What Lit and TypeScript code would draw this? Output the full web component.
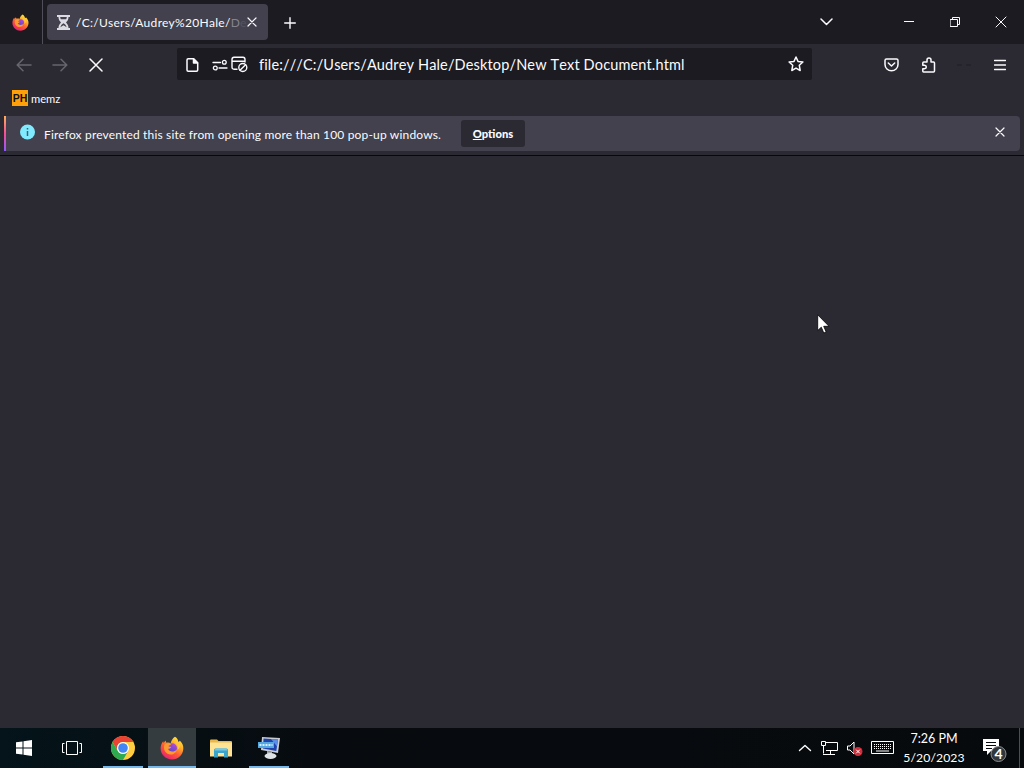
import { LitElement, html, css, svg } from "lit";
import { customElement } from "lit/decorators.js";

const firefox = (size: number) => html`<svg width=${size} height=${size} viewBox="0 0 24 24">
  <defs>
    <linearGradient id="ff" x1="0.85" y1="0" x2="0.2" y2="1">
      <stop offset="0" stop-color="#fff04a" /><stop offset="0.3" stop-color="#ffb32b" />
      <stop offset="0.6" stop-color="#ff5a35" /><stop offset="1" stop-color="#e8187a" />
    </linearGradient>
    <linearGradient id="fg" x1="0.7" y1="0" x2="0.3" y2="1">
      <stop offset="0" stop-color="#b04ad8" /><stop offset="1" stop-color="#5146c8" />
    </linearGradient>
  </defs>
  <path fill="url(#ff)" d="M15 .8c2.2 1.4 3.1 3.2 3.2 4.6 1 .6 1.4 0 1.5-.9C22.400 7 23.600 10 23.300 13 22.800 19 18 23.500 12 23.500S.7 19 .6 12.600C.6 9.500 1.600 7 3.200 5.200l.4 1.700L5.500 4.600l.9 2.200C8 6.300 9.500 6.500 10.600 7.200 11.500 4 13 2 15 .8Z" />
  <circle cx="12" cy="12.300" r="5" fill="url(#fg)" />
  <path fill="#ff9a2e" d="M4.500 8.500c2-1.600 4.800-1.500 6.600-.4-.4 1-1.500 1.500-2.700 2 .8.700 1.800.8 2.900.8-.8 1.400-2 1.700-3.200 1.900 1 3.300 6 4 9 .4-1 5.500-8.500 7.300-12 2.300C3.700 13 3.600 10.500 4.500 8.500Z" />
  <path fill="#ffc83a" d="M14 6.500c3 1 4.500 4 3.700 7.300 2-1.300 3-4 2.500-6.300-1.200-1.700-3.500-2-6.200-1Z" />
</svg>`;

const line = (w: number, h: number, body: unknown, stroke = 1.5) => html`<svg
  width=${w} height=${h} viewBox="0 0 ${w} ${h}" fill="none" stroke="currentColor"
  stroke-width=${stroke} stroke-linecap="round" stroke-linejoin="round">${body}</svg>`;

const cross = (size: number, stroke: number) =>
  line(size, size, svg`<path d="M1 1 ${size - 1} ${size - 1}M${size - 1} 1 1 ${size - 1}" />`, stroke);

@customElement("tab-strip")
class TabStrip extends LitElement {
  static styles = css`
    :host { display: flex; height: 44px; background: #1c1b22; color: #fbfbfe; }
    svg { display: block; flex: none; }
    .home { width: 43px; padding-right: 2px; box-sizing: border-box; display: grid; place-items: center; border-right: 1px solid #504f59; }
    .tab { display: flex; align-items: center; box-sizing: border-box; width: 221px; height: 36px; margin: 4px 0 0 4px; padding: 0 11px 0 10px; border-radius: 4px; background: #42414d; }
    .title { margin: 1px 0 0 6px; white-space: nowrap; font-size: 12px; letter-spacing: 0.320px; line-height: 20px; }
    .fade { color: #85848e; }
    .fade + .fade { color: #55545f; }
    .close { margin-left: auto; }
    .add { display: grid; place-items: center; width: 43px; padding-top: 1px; }
    .all { display: grid; place-items: center; width: 36px; margin-left: auto; margin-right: 42px; }
    .win { display: grid; place-items: center; width: 46px; }
  `;
  render() {
    return html`
      <div class="home">${firefox(17)}</div>
      <div class="tab">
        <svg width="13" height="15" viewBox="0 0 13 15" fill="#dcdbe3"><path d="M0 0h13v2h-1.500c0 2.500-1 4-2.500 5.500 1.500 1.500 2.500 3 2.500 5.500H13v2H0v-2h1.500c0-2.500 1-4 2.500-5.500-1.500-1.500-2.500-3-2.500-5.500H0Z" /><path fill="#42414d" d="M3.200 2h6.600c0 1-.3 1.600-.7 2.200H3.900C3.500 3.600 3.200 3 3.200 2ZM6.500 8.300C5 9 3.800 10.500 3.400 12.300l3.100-2 3.100 2C9.200 10.500 8 9 6.500 8.300Z" /></svg>
        <span class="title">/C:/Users/Audrey%20Hale/<span class="fade">D</span><span class="fade">e</span></span>
        <span class="close">${cross(10, 1.200)}</span>
      </div>
      <div class="add">${line(12, 12, svg`<path d="M6 .7v10.600M.7 6h10.600" />`, 1.400)}</div>
      <div class="all">${line(13, 8, svg`<path d="m1 1 5.500 5.500L12 1" />`)}</div>
      <div class="win">${line(10, 2, svg`<path d="M0 .5h10" />`, 1)}</div>
      <div class="win">${line(10, 10, svg`<path d="M.5 2.500h7v7h-7ZM2.500 2.500v-2h7v7h-2" />`, 1)}</div>
      <div class="win">${cross(12, 1)}</div>
    `;
  }
}

@customElement("nav-bar")
class NavBar extends LitElement {
  static styles = css`
    :host { display: flex; align-items: center; height: 40px; padding: 0 6px; background: #2b2a33; color: #fbfbfe; }
    svg { display: block; }
    .btn { display: grid; place-items: center; width: 36px; height: 40px; padding-top: 1px; box-sizing: border-box; }
    .dim { color: #67666f; }
    .ghost { color: #24232b; }
    .url { display: flex; align-items: center; width: 635px; height: 32px; margin: 0 62px 0 63px; border-radius: 2px; background: #1c1b22; box-sizing: border-box; padding: 1px 8px 0 9px; }
    .perm { margin-left: 13px; }
    .popup { margin-left: 3px; }
    .text { margin-left: 11px; font-size: 14.500px; letter-spacing: 0.140px; line-height: 22px; font-kerning: none; white-space: nowrap; }
    .star { margin: -1px 0 0 auto; }
  `;
  render() {
    return html`
      <div class="btn dim">${line(16, 14, svg`<path d="M15 7H1.500M7 1.200 1.200 7 7 12.800" />`)}</div>
      <div class="btn dim">${line(16, 14, svg`<path d="M1 7h13.500M9 1.200 14.800 7 9 12.800" />`)}</div>
      <div class="btn">${cross(14, 1.500)}</div>
      <div class="url">
        ${line(13, 14, svg`<path d="M2.200.8h5.500l4 4V12q0 1.200-1.200 1.200H2.200Q1 13.200 1 12V2Q1 .8 2.200.8Z" /><path fill="currentColor" d="M7.500 1v4h4Z" />`)}
        <span class="perm">${line(16, 12, svg`<path d="M1 3.500h7.500M7 9h8" /><circle cx="12.300" cy="3.300" r="1.900" /><circle cx="3.300" cy="9" r="1.900" />`, 1.300)}</span>
        <span class="popup">${line(17, 17, svg`<path d="M6 13.200H3Q1 13.200 1 11V3.500Q1 1.300 3 1.300h9q2 0 2 2.200V6M1 5.300h13" /><circle cx="11.800" cy="11.500" r="4" /><path d="m9 14.300 5.600-5.600" />`, 1.400)}</span>
        <span class="text">file:///C:/Users/Audrey Hale/Desktop/New Text Document.html</span>
        <span class="star">${line(16, 16, svg`<path d="m8 1 2 4.400 4.900.6-3.600 3.300.9 5.200L8 12.100 3.800 14.500l.9-5.200L1.100 6 6 5.400Z" />`, 1.500)}</span>
      </div>
      <div class="btn">${line(16, 14, svg`<path d="M2.500 1h10Q14 1 14 2.500V6.500A6.500 6.300 0 0 1 1 6.500V2.500Q1 1 2.500 1Z" /><path d="m4.300 5 3.200 3 3.200-3" />`)}</div>
      <div class="btn">${line(15, 16, svg`<path d="M2.500 15h10q1 0 1-1V6q0-1-1-1H10V3q0-2-2-2T6 3v2H2.800q-1 0-1 1v2.200H3.500Q5.300 8.400 5.300 10T3.500 11.800H1.800V14.300Q1.800 15 2.500 15Z" />`)}</div>
      <div class="btn ghost">${line(16, 4, svg`<path d="M2 2h3M11 2h3" />`, 2)}</div>
      <div class="btn">${line(12, 12, svg`<path d="M.5 1.500h11M.5 6h11M.5 10.500h11" />`, 1.400)}</div>
    `;
  }
}

@customElement("notice-bar")
class NoticeBar extends LitElement {
  static styles = css`
    :host { display: block; background: #2b2a33; color: #fbfbfe; height: 72px; border-bottom: 1px solid #08080c; box-sizing: border-box; }
    svg { display: block; }
    .marks { display: flex; align-items: center; height: 32px; padding-left: 12px; box-sizing: border-box; }
    .ph { width: 16px; height: 16px; margin-top: -4px; background: #ff9f0a; color: #111; font: bold 10.500px/17px "Liberation Sans", sans-serif; text-align: center; }
    .memz { margin: -2px 0 0 3px; font-size: 11.200px; line-height: 16px; }
    .bar { display: flex; align-items: center; height: 35px; margin: 0 4px 0 4px; border-radius: 0 4px 4px 0; background: linear-gradient(180deg, #ffb05c, #f54e96 50%, #9059ff) 0 0 / 2px 100% no-repeat #42414d; box-sizing: border-box; padding: 0 15px 0 16px; }
    .info { margin-top: -4px; }
    .msg { width: 408px; margin-left: 9px; font-size: 12px; letter-spacing: 0.170px; white-space: nowrap; line-height: 20px; padding-top: 2px; }
    .opt { width: 64px; height: 27px; margin-left: 9px; border-radius: 3px; background: #2b2a33; text-align: center; font: 900 11.200px/27px Lato, sans-serif; }
    .x { margin-left: auto; margin-top: -3px; }
  `;
  render() {
    return html`
      <div class="marks"><div class="ph">PH</div><div class="memz">memz</div></div>
      <div class="bar">
        <svg class="info" width="15" height="16" viewBox="0 0 15 16"><circle cx="7.500" cy="8" r="7.500" fill="#80ebff" /><path d="M7.500 4v1.500M7.500 7v5" stroke="#42616e" stroke-width="1.500" /></svg>
        <div class="msg">Firefox prevented this site from opening more than 100 pop-up windows.</div>
        <div class="opt"><u>O</u>ptions</div>
        <div class="x">${cross(10, 1.200)}</div>
      </div>
    `;
  }
}

@customElement("task-bar")
class TaskBar extends LitElement {
  static styles = css`
    :host { display: flex; height: 40px; background: linear-gradient(90deg, #04141a, #070b0f 30%, #070a0d); color: #fff; }
    svg { display: block; }
    .cell { display: grid; place-items: center; box-sizing: border-box; width: 48px; height: 40px; }
    .app { width: 40px; margin: 0 5px 0 4px; border-bottom: 2px solid #76b9ed; padding-top: 2px; }
    .chrome { margin-left: 7px; }
    .active { width: 48px; margin: 0; background: #343c40; }
    .folder { width: 49px; }
    .tray { display: flex; align-items: center; margin-left: auto; }
    .clock { width: 62px; margin-left: 8px; text-align: center; font-size: 12.500px; line-height: 19px; white-space: nowrap; }
    .date { font-size: 12.200px; letter-spacing: 0.100px; }
    .bell { margin: 2px 10px 0 17px; }
    .edge { width: 5px; height: 40px; border-left: 1px solid #4b4f52; box-sizing: border-box; }
    .badge { font: bold 14px Lato, sans-serif; }
  `;
  render() {
    return html`
      <div class="cell"><svg width="16" height="16" viewBox="0 0 16 16" fill="#fff"><path d="M0 2.300 6.500 1.400V7.500H0ZM7.500 1.200 16 0V7.500H7.500ZM0 8.500H6.500V14.600L0 13.700ZM7.500 8.500H16V16L7.500 14.800Z" /></svg></div>
      <div class="cell"><svg width="20" height="15" viewBox="0 0 20 15" fill="none" stroke="#fff"><path d="M4.500.5h11v13h-11ZM2.500 2.500h-2v9h2M17.500 2.500h2v9h-2" /></svg></div>
      <div class="cell app chrome"><svg width="24" height="24" viewBox="0 0 24 24"><circle cx="12" cy="12" r="12" fill="#ffcd40" /><path fill="#ea4335" d="M1.600 6A12 12 0 0 1 22.400 6H12A6 6 0 0 0 6.800 15Z" /><path fill="#2da94f" d="M1.600 6A12 12 0 0 0 12 24L17.200 15A6 6 0 0 1 6.800 15Z" /><circle cx="12" cy="12" r="6" fill="#fff" /><circle cx="12" cy="12" r="4.800" fill="#4285f4" /></svg></div>
      <div class="cell app active">${firefox(24)}</div>
      <div class="cell folder"><svg width="22" height="19" viewBox="0 0 22 19"><path fill="#e8b84d" d="M0 1.500Q0 .5 1 .5h6l1.500 1.500H21q1 0 1 1V17H0Z" /><path fill="#ffe394" d="M0 3.500h22v14H0Z" /><path fill="#3aa5c8" d="M4 18.500V11Q4 9.500 5.500 9.500h11q1.500 0 1.500 1.500v7.500H14V14H8v4.500Z" /><path fill="#74c8ea" d="M5.500 9.500h11l1 2H4.500Z" /></svg></div>
      <div class="cell app"><svg width="24" height="24" viewBox="0 0 24 24"><path fill="#c9cdd3" d="m5 1 18 1-2 15L4 14Z" /><path fill="#2042ae" d="m6.500 2.500 14.500 1-1.700 11.500L6 12.500Z" /><path fill="#5b8ee8" d="m14 3 7 .5-1 7Z" /><path fill="#55a7df" d="M1 6h16v6H1Z" /><path stroke="#d4edff" stroke-dasharray="2 1" d="M2.500 9h13" stroke-width="2" /><path fill="#a3a8ae" d="m10 15 5 1v4h-5Z" /><ellipse cx="13.500" cy="20" rx="6" ry="2.900" fill="#dfe2e6" /></svg></div>
      <div class="tray">
        ${line(14, 8, svg`<path d="m1.500 6.500 5.500-5 5.500 5" />`, 1.400)}
        <svg width="35" height="16" viewBox="0 0 35 16" fill="none" stroke="#fff"><path d="M13 2.500h12.500v8H14M11 14.500h12M18.500 10.500v4M9.500 1.500h4v4h-4ZM11.500 5.500v8" /></svg>
        <svg width="16" height="16" viewBox="0 0 16 16" fill="none" stroke="#fff"><path d="M.5 6h2.500L7 2v12L3 10H.5Z" /><circle cx="11" cy="11.500" r="4.500" fill="#d0303d" stroke="none" /><path d="m9.200 9.700 3.600 3.600m0-3.600-3.600 3.600" /></svg>
        <svg width="32" height="14" viewBox="0 0 32 14" fill="none" stroke="#fff"><path d="M8.500.5h22v12h-22Z" /><path stroke-dasharray="1 1" d="M11 3.500h18M11 5.500h18M11 7.500h18" /><path d="M13 10h13" /></svg>
        <div class="clock"><div>7:26 PM</div><div class="date">5/20/2023</div></div>
        <svg class="bell" width="27" height="25" viewBox="0 0 27 25"><path fill="#fff" d="M1 2h16v12H9l-4 4v-4H1Z" /><path stroke="#070b0f" d="M4 5.500h10M4 8.500h10M4 11.500h6" /><circle cx="16.500" cy="17" r="7.500" fill="#33373b" stroke="#8b8e91" /><text class="badge" x="16.500" y="22" fill="#fff" text-anchor="middle">4</text></svg>
        <div class="edge"></div>
      </div>
    `;
  }
}

@customElement("app-root")
class AppRoot extends LitElement {
  static styles = css`
    :host { display: flex; flex-direction: column; position: relative; width: 1024px; height: 768px; overflow: hidden; background: #2b2a33; font-family: Lato, sans-serif; }
    .page { flex: 1; }
    .cursor { position: absolute; left: 817px; top: 314px; }
  `;
  render() {
    return html`
      <tab-strip></tab-strip>
      <nav-bar></nav-bar>
      <notice-bar></notice-bar>
      <main class="page"></main>
      <task-bar></task-bar>
      <svg class="cursor" width="13" height="21" viewBox="0 0 13 21"><path fill="#fff" stroke="#000" stroke-width=".8" d="M.7.800V16.500L4.300 13.200 6.800 19 9.200 18 6.700 12.300H12Z" /></svg>
    `;
  }
}
